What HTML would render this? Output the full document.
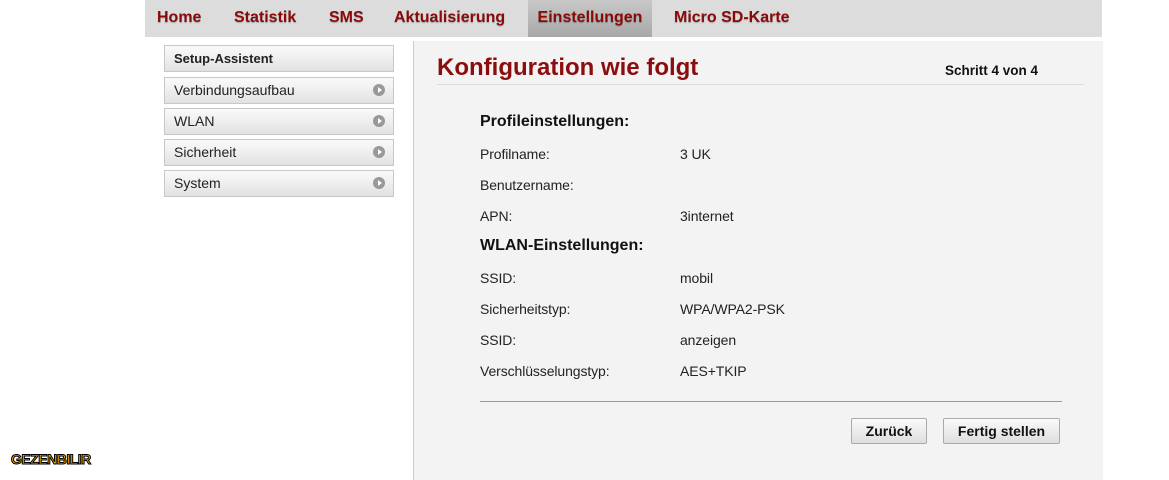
<!DOCTYPE html><html><head><style>
body{margin:0;width:1169px;height:480px;background:#fff;font-family:"Liberation Sans",sans-serif;position:relative;overflow:hidden}
.nav{position:absolute;left:145px;top:0;width:957px;height:37px;background:#dcdcdc}
.nav span{position:absolute;top:0;height:37px;line-height:36px;font-weight:bold;font-size:16px;color:#8a0a0a;text-shadow:0 1px 1px rgba(0,0,0,.25)}
.act{background:linear-gradient(#c8c8c8,#a8a8a8)}
.side{position:absolute;left:164px;width:228px;height:25px;border:1px solid #c8c8c8;background:linear-gradient(#fafafa,#e2e2e2);font-size:14px;line-height:25px;color:#222}
.side b{font-size:13px}
.side i{position:absolute;right:8px;top:6px;width:12px;height:12px;border-radius:50%;background:#999}
.side i:after{content:"";position:absolute;left:5px;top:3px;border-left:4px solid #fff;border-top:3px solid transparent;border-bottom:3px solid transparent}
.main{position:absolute;left:413px;top:41px;width:689px;height:439px;background:#f3f3f3;border-left:1px solid #ccc}
.t{position:absolute;font-size:14px;color:#222;letter-spacing:-0.1px}
.h{position:absolute;font-size:16px;font-weight:bold;color:#111}
.btn{position:absolute;top:418px;height:24px;border:1px solid #aaa;border-radius:2px;background:linear-gradient(#fafafa,#dedede);font-weight:bold;font-size:14px;line-height:24px;text-align:center;color:#111}
</style></head><body>
<div class="nav">
<span style="left:12px">Home</span>
<span style="left:89px">Statistik</span>
<span style="left:184px">SMS</span>
<span style="left:249px">Aktualisierung</span>
<span class="act" style="left:383px;width:124px;text-align:center">Einstellungen</span>
<span style="left:529px">Micro SD-Karte</span>
</div>
<div class="side" style="top:45px;padding-left:9px;width:219px"><b>Setup-Assistent</b></div>
<div class="side" style="top:77px;padding-left:9px;width:219px">Verbindungsaufbau<i></i></div>
<div class="side" style="top:108px;padding-left:9px;width:219px">WLAN<i></i></div>
<div class="side" style="top:139px;padding-left:9px;width:219px">Sicherheit<i></i></div>
<div class="side" style="top:170px;padding-left:9px;width:219px">System<i></i></div>
<div class="main"></div>
<div style="position:absolute;left:437px;top:54px;font-size:24px;font-weight:bold;color:#8b0d0d">Konfiguration wie folgt</div>
<div style="position:absolute;left:945px;top:63px;font-size:13.5px;font-weight:bold;color:#111">Schritt 4 von 4</div>
<div style="position:absolute;left:437px;top:84px;width:647px;height:1px;background:#ddd"></div>
<div class="h" style="left:480px;top:113px">Profileinstellungen:</div>
<div class="t" style="left:480px;top:146px">Profilname:</div><div class="t" style="left:680px;top:146px">3 UK</div>
<div class="t" style="left:480px;top:177px">Benutzername:</div>
<div class="t" style="left:480px;top:208px">APN:</div><div class="t" style="left:680px;top:208px">3internet</div>
<div class="h" style="left:480px;top:237px">WLAN-Einstellungen:</div>
<div class="t" style="left:480px;top:270px">SSID:</div><div class="t" style="left:680px;top:270px">mobil</div>
<div class="t" style="left:480px;top:301px">Sicherheitstyp:</div><div class="t" style="left:680px;top:301px">WPA/WPA2-PSK</div>
<div class="t" style="left:480px;top:332px">SSID:</div><div class="t" style="left:680px;top:332px">anzeigen</div>
<div class="t" style="left:480px;top:363px">Verschlüsselungstyp:</div><div class="t" style="left:680px;top:363px">AES+TKIP</div>
<div style="position:absolute;left:480px;top:401px;width:582px;height:1px;background:#999"></div>
<div class="btn" style="left:851px;width:74px">Zurück</div>
<div class="btn" style="left:943px;width:115px">Fertig stellen</div>
<div style="position:absolute;left:11px;top:451px;font-size:14px;font-weight:bold;color:#f5a800;-webkit-text-stroke:1px #000;letter-spacing:-0.5px">GEZENBILIR</div>
</body></html>
